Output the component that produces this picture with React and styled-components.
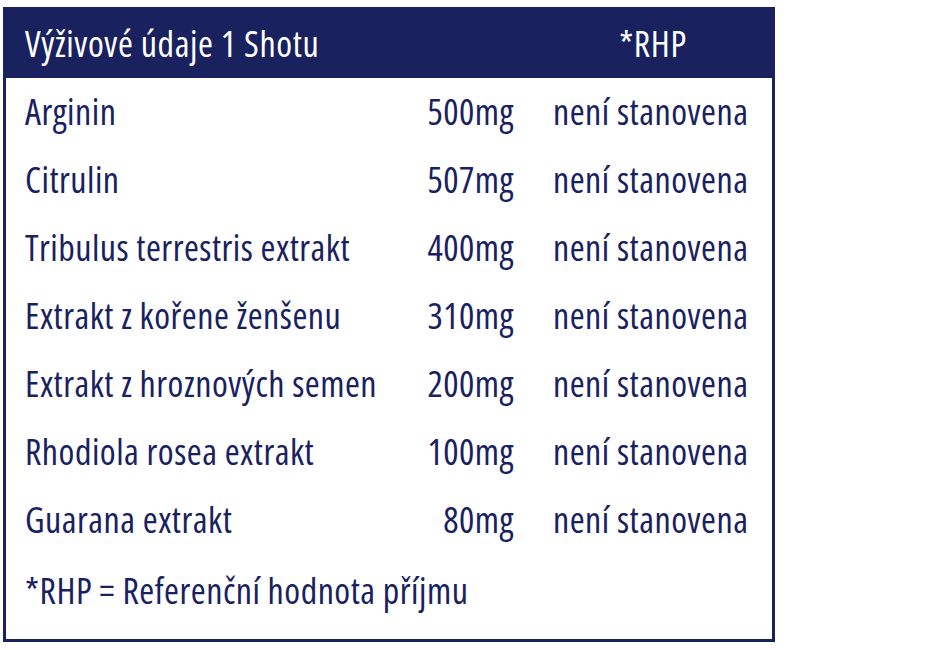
import React from "react";
import styled, { createGlobalStyle } from "styled-components";

const GlobalStyle = createGlobalStyle`
  body {
    margin: 0;
    background: #fff;
    font-family: "Open Sans", "Liberation Sans", sans-serif;
    font-stretch: condensed;
  }
`;

const NAVY = "#1a215f";

const Panel = styled.div`
  width: 772px;
  margin: 7px 0 0 3px;
  border: 3px solid ${NAVY};
  box-sizing: border-box;
  padding-bottom: 14px;
  color: ${NAVY};
`;

const Grid = styled.div`
  display: grid;
  grid-template-columns: 1fr auto 200px;
  column-gap: 39px;
  padding: 0 19px;
  font-size: 36px;
  letter-spacing: 0.5px;
  line-height: 68px;
  white-space: nowrap;
`;

const Head = styled(Grid)`
  background: ${NAVY};
  color: #fff;
  height: 68px;
  letter-spacing: 0.6px;
`;

const Title = styled.div`
  grid-column: 1 / span 2;
`;

const HeadRhp = styled.div`
  text-align: center;
`;

const Name = styled.div``;

const Amount = styled.div`
  text-align: right;
`;

const Rhp = styled.div``;

const Note = styled.div`
  grid-column: 1 / -1;
  margin-top: 3px;
`;

const rows = [
  ["Arginin", "500mg"],
  ["Citrulin", "507mg"],
  ["Tribulus terrestris extrakt", "400mg"],
  ["Extrakt z kořene ženšenu", "310mg"],
  ["Extrakt z hroznových semen", "200mg"],
  ["Rhodiola rosea extrakt", "100mg"],
  ["Guarana extrakt", "80mg"],
];

export default function App() {
  return (
    <>
      <GlobalStyle />
      <Panel>
        <Head>
          <Title>Výživové údaje 1 Shotu</Title>
          <HeadRhp>*RHP</HeadRhp>
        </Head>
        <Grid>
          {rows.map(([name, amount]) => (
            <React.Fragment key={name}>
              <Name>{name}</Name>
              <Amount>{amount}</Amount>
              <Rhp>není stanovena</Rhp>
            </React.Fragment>
          ))}
          <Note>*RHP = Referenční hodnota příjmu</Note>
        </Grid>
      </Panel>
    </>
  );
}
